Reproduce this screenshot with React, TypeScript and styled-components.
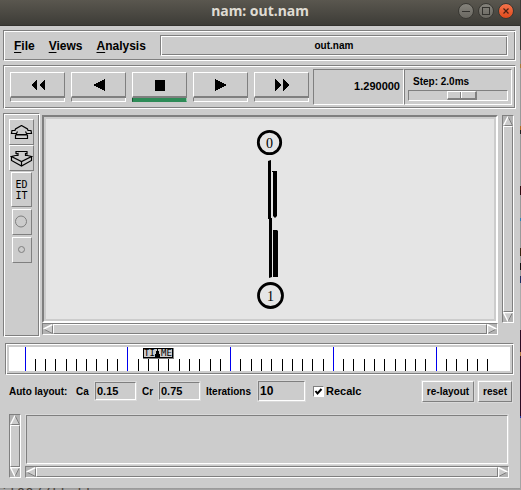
import React from "react";
import styled, { createGlobalStyle, css } from "styled-components";

const FACE = "#cccccc";
const DARK = "#7f7f7f";
const TROUGH = "#b3b3b3";

const Global = createGlobalStyle`
  * { box-sizing: border-box; }
  body { margin: 0; background: #9d9d9d; font-family: "Liberation Sans", Arial, sans-serif; color: #000; }
  button, input { font: inherit; color: inherit; margin: 0; padding: 0; border-radius: 0; }
`;

const raised = css`
  border: 1px solid;
  border-color: #fff ${DARK} ${DARK} #fff;
`;
const sunken = css`
  border: 1px solid;
  border-color: ${DARK} #fff #fff ${DARK};
`;
const groove = css`
  ${sunken}
  box-shadow: inset 1px 1px #fff, inset -1px -1px ${DARK};
`;

const Desktop = styled.div`
  display: flex;
  flex-direction: column;
  min-height: 100vh;
  padding-right: 1px;
  background: linear-gradient(#3b3a36 0 50px, #8c8c8c 50px 64px, #a87a3a 64px 68px, #999 68px 126px, #b06a20 126px 130px,
    #222 130px 134px, #999 134px 186px, #300a10 186px 195px, #999 195px 218px, #2b83b8 218px 221px, #999 221px 248px,
    #3a2410 248px 256px, #999 256px 263px, #111 263px 270px, #999 270px 276px, #1c2c60 276px 283px, #aaa 283px 330px,
    #2c0a22 330px 352px, #b07a40 352px 356px, #2c0a22 356px 416px, #2233aa 416px 418px, #a4a4a4 418px);
`;

const Window = styled.main`
  flex: 1;
  display: flex;
  flex-direction: column;
  background: ${FACE};
`;

const TitleBar = styled.header`
  position: relative;
  display: flex;
  align-items: center;
  justify-content: center;
  height: 26px;
  padding-bottom: 4px;
  background: linear-gradient(#5a574f, #3d3c37);
  border-bottom: 1px solid #33322e;
`;
const Title = styled.h1`
  margin: 0;
  font: bold 14px/20px "Noto Sans", sans-serif;
  color: #dfdbd2;
`;
const WindowControls = styled.div`
  position: absolute;
  right: 6px;
  top: 3px;
  display: flex;
  gap: 4px;
`;
const WindowButton = styled.button<{ $close?: boolean }>`
  display: grid;
  width: 16px;
  height: 16px;
  border: 1px solid #393833;
  border-radius: 50%;
  background: ${(p) => (p.$close ? "linear-gradient(#f4744c, #df4a1b)" : "linear-gradient(#85837c, #6a6861)")};
`;

const Body = styled.div`
  flex: 1;
  display: flex;
  flex-direction: column;
  padding: 4px 4px 10px 3px;
`;

const MenuBar = styled.nav`
  ${groove}
  display: flex;
  align-items: center;
  height: 31px;
  padding: 0 7px 0 10px;
`;
const MenuButton = styled.button`
  margin-right: 14px;
  border: 0;
  background: none;
  font-size: 12px;
  line-height: 20px;
  font-weight: bold;
  text-underline-offset: 2px;
`;
const FileName = styled.div`
  ${groove}
  flex: 1;
  height: 21px;
  text-align: center;
  font-size: 10px;
  font-weight: bold;
  line-height: 19px;
`;

const ToolBar = styled.section`
  ${groove}
  display: flex;
  height: 44px;
  margin-top: 4px;
  padding: 3px 3px 3px 6px;
`;
const Transport = styled.div`
  flex: 1;
  display: flex;
  gap: 6px;
  padding: 3px 0;
  margin-right: 4px;
`;
const TransportKey = styled.div`
  flex: 1;
`;
const KeyButton = styled.button`
  ${raised}
  border-bottom-width: 2px;
  display: flex;
  align-items: center;
  justify-content: center;
  width: 100%;
  height: 26px;
  background: ${FACE};
`;
const KeyLamp = styled.div<{ $on?: boolean }>`
  ${sunken}
  height: 4px;
  border-top: 0;
  background: ${(p) => (p.$on ? "#2e8b57" : FACE)};
  ${(p) => p.$on && "border-color: #1c5334 #8fc9a8 #2e8b57 #1c5334;"}
`;
const Readout = styled.output`
  ${sunken}
  width: 91px;
  padding-right: 3px;
  text-align: right;
  font-size: 11px;
  font-weight: bold;
  line-height: 33px;
`;
const StepPanel = styled.div`
  ${sunken}
  width: 108px;
  padding: 6px 3px 0;
`;
const StepLabel = styled.label`
  display: block;
  padding-left: 5px;
  font-size: 10px;
  font-weight: bold;
  line-height: 12px;
`;
const Slider = styled.input`
  ${sunken}
  appearance: none;
  display: block;
  width: 100%;
  height: 11px;
  margin-top: 2px;
  background: ${FACE};
  &::-webkit-slider-thumb {
    appearance: none;
    width: 30px;
    height: 9px;
    ${raised}
    border-bottom-width: 2px;
    border-right-width: 2px;
    background: linear-gradient(90deg, ${FACE} 0 12px, ${DARK} 12px 13px, #fff 13px 14px, ${FACE} 14px);
  }
`;

const Workspace = styled.div`
  flex: 1;
  display: flex;
  margin-top: 4px;
`;
const SideBar = styled.aside`
  ${groove}
  display: flex;
  flex-direction: column;
  align-items: center;
  width: 37px;
  margin-right: 2px;
  padding-top: 5px;
`;
const ToolButton = styled.button<{ $w: number; $h: number; $gap?: number }>`
  ${raised}
  display: grid;
  place-items: center;
  flex: none;
  width: ${(p) => p.$w}px;
  height: ${(p) => p.$h}px;
  margin-top: ${(p) => p.$gap ?? 0}px;
  background: ${FACE};
  font: 10px/11px "DejaVu Sans Mono", monospace;
`;
const ViewColumn = styled.div`
  flex: 1;
  display: flex;
  flex-direction: column;
  min-width: 0;
  padding: 2px 0;
`;
const View = styled.div`
  flex: 1;
  display: flex;
  min-height: 208px;
  padding: 2px;
  border: 2px solid;
  border-color: ${DARK} #fff #fff ${DARK};
`;
const Network = styled.svg`
  flex: 1;
  width: 100%;
  height: 100%;
  background: #e5e5e5;
`;
const ScrollSide = styled.div`
  display: flex;
  margin: 2px 2px 14px 4px;
`;

const Bar = styled.div<{ $vertical?: boolean }>`
  ${sunken}
  display: flex;
  flex-direction: ${(p) => (p.$vertical ? "column" : "row")};
  ${(p) => (p.$vertical ? "width: 12px;" : "height: 12px;")}
  background: ${TROUGH};
`;
const ArrowButton = styled.button`
  display: block;
  width: 10px;
  height: 10px;
  border: 0;
  background: none;
  svg { display: block; }
`;
const Thumb = styled.div`
  ${raised}
  flex: 1;
  background: ${FACE};
`;

const TimePanel = styled.section`
  ${groove}
  height: 32px;
  margin: 6px 2px 0;
  padding: 3px;
`;
const TimeScale = styled.svg`
  display: block;
  width: 100%;
  height: 24px;
  background: #fff;
`;

const LayoutForm = styled.form`
  display: flex;
  align-items: center;
  height: 24px;
  margin: 4px 0 1px;
  padding: 0 0 0 6px;
  font-weight: bold;
  font-size: 10px;
  label { white-space: nowrap; }
`;
const Caption = styled.span`
  width: 67px;
  white-space: nowrap;
`;
const Field = styled.label<{ $w: number }>`
  display: flex;
  align-items: center;
  justify-content: space-between;
  width: ${(p) => p.$w}px;
  margin-right: 6px;
`;
const Entry = styled.input<{ $large?: boolean }>`
  ${sunken}
  width: ${(p) => (p.$large ? 47 : 41)}px;
  height: ${(p) => (p.$large ? 20 : 18)}px;
  padding-left: 1px;
  outline: 1px solid #d9d9d9;
  background: ${FACE};
  font-size: ${(p) => (p.$large ? 12 : 11)}px;
`;
const CheckLabel = styled.label`
  display: flex;
  align-items: center;
  gap: 2px;
  margin-left: 2px;
  font-size: 11px;
`;
const CheckCell = styled.span`
  display: grid;
  > * { grid-area: 1 / 1; }
  svg { pointer-events: none; }
  input:not(:checked) + svg { visibility: hidden; }
`;
const CheckBox = styled.input`
  ${sunken}
  appearance: none;
  width: 11px;
  height: 11px;
  background: #fff;
`;
const FormButtons = styled.div`
  display: flex;
  gap: 4px;
  margin-left: auto;
  padding-right: 4px;
`;
const PushButton = styled.button`
  ${raised}
  height: 21px;
  padding: 0 3px;
  outline: 1px solid #d9d9d9;
  background: ${FACE};
  font-weight: bold;
  white-space: nowrap;
  font-size: 10px;
  padding: 0 4px;
`;

const Notes = styled.section`
  display: flex;
  gap: 4px;
  height: 64px;
  margin: 10px 7px 0 6px;
`;
const NotesColumn = styled.div`
  flex: 1;
  display: flex;
  flex-direction: column;
`;
const NotesArea = styled.div`
  ${sunken}
  flex: 1;
  margin: 1px 1px 2px;
  outline: 1px solid #d9d9d9;
`;

const Behind = styled.footer`
  height: 3px;
  overflow: hidden;
  background: linear-gradient(#969696, #b0b0b0);
  color: #484038;
  font: 14px/10px "DejaVu Sans Mono", monospace;
  white-space: pre;
`;

type Dir = "up" | "down" | "left" | "right";

const arrows: Record<Dir, { fill: string; light: string; dark: string }> = {
  up: { fill: "M5 0L10 10H0Z", light: "M.5 9.5L5 .5", dark: "M5 .5L9.5 9.5H0" },
  down: { fill: "M0 0H10L5 10Z", light: "M10 .5H.5L5 9.5", dark: "M5 9.5L9.5 .5" },
  left: { fill: "M0 5L10 0V10Z", light: "M.5 5L9.5 .5", dark: "M.5 5L9.5 9.5V0" },
  right: { fill: "M0 0L10 5L0 10Z", light: "M.5 10V.5L9.5 5", dark: "M9.5 5L.5 9.5" },
};

function Arrow({ dir }: { dir: Dir }) {
  const a = arrows[dir];
  return (
    <ArrowButton type="button" aria-label={`Scroll ${dir}`}>
      <svg width="10" height="10" fill="none">
        <path d={a.fill} fill={FACE} />
        <path d={a.dark} stroke={DARK} />
        <path d={a.light} stroke="#fff" strokeWidth="1.4" />
      </svg>
    </ArrowButton>
  );
}

function ScrollBar({ vertical }: { vertical?: boolean }) {
  return (
    <Bar $vertical={vertical}>
      <Arrow dir={vertical ? "up" : "left"} />
      <Thumb />
      <Arrow dir={vertical ? "down" : "right"} />
    </Bar>
  );
}

const keys = [
  { name: "Rewind", d: "M7 0V12L1 6ZM15 0V12L9 6Z" },
  { name: "Play backward", d: "M14 0V12L2 6Z" },
  { name: "Stop", d: "M3 1H13V12H3Z", on: true },
  { name: "Play forward", d: "M2 0V12L14 6Z" },
  { name: "Fast forward", d: "M1 0V12L7 6ZM9 0V12L15 6Z" },
];

const ticks = Array.from({ length: 46 }, (_, i) => ({ x: 16 + Math.floor(i * 10.28), major: i % 10 === 0 }));

export default function App() {
  return (
    <Desktop>
      <Global />
      <Window>
        <TitleBar>
          <Title>nam: out.nam</Title>
          <WindowControls>
            <WindowButton aria-label="Minimize">
              <svg width="14" height="14"><path d="M3 7.5H11" stroke="#33322e" /></svg>
            </WindowButton>
            <WindowButton aria-label="Maximize">
              <svg width="14" height="14"><rect x="3.5" y="3.5" width="7" height="7" fill="none" stroke="#33322e" /></svg>
            </WindowButton>
            <WindowButton aria-label="Close" $close>
              <svg width="14" height="14"><path d="M4.5 4.5L9.5 9.5M9.5 4.5L4.5 9.5" stroke="#4a2013" strokeWidth="1.2" /></svg>
            </WindowButton>
          </WindowControls>
        </TitleBar>
        <Body>
          <MenuBar>
            <MenuButton><u>F</u>ile</MenuButton>
            <MenuButton><u>V</u>iews</MenuButton>
            <MenuButton><u>A</u>nalysis</MenuButton>
            <FileName>out.nam</FileName>
          </MenuBar>

          <ToolBar>
            <Transport>
              {keys.map((k) => (
                <TransportKey key={k.name}>
                  <KeyButton aria-label={k.name}>
                    <svg width="16" height="12" shapeRendering="crispEdges"><path d={k.d} /></svg>
                  </KeyButton>
                  <KeyLamp $on={k.on} />
                </TransportKey>
              ))}
            </Transport>
            <Readout>1.290000</Readout>
            <StepPanel>
              <StepLabel htmlFor="step">Step: 2.0ms</StepLabel>
              <Slider id="step" type="range" defaultValue={56} />
            </StepPanel>
          </ToolBar>

          <Workspace>
            <SideBar>
              <ToolButton $w={25} $h={26} aria-label="Zoom in">
                <svg width="23" height="24" fill="none" stroke="#000" strokeWidth="1.2">
                  <path d="M11.5 5.5L5.5 9L5 10.5H2L1.5 13.5H6.5L7.5 11.5M11.5 5.5L17.5 9L18 10.5H21L21.5 13.5H16.5L15.5 11.5M6.5 13.5V14.5H16.5V13.5" />
                  <path d="M5.5 15V18.5H17.5V15Z" />
                </svg>
              </ToolButton>
              <ToolButton $w={25} $h={26} aria-label="Zoom out">
                <svg width="23" height="24" fill="none" stroke="#000" strokeWidth="1.2">
                  <path d="M6 8V5.5H17V8L15.5 7.5V9.5H17.5L21.5 10.5L11.5 15.5L1.5 10.5L5.5 9.5H8V7.5L6 8" />
                  <path d="M1.5 10.5V14.5L11.5 20L21.5 14.5V10.5M11.5 15.5V20" />
                </svg>
              </ToolButton>
              <ToolButton $w={21} $h={35} $gap={1}>ED<br />IT</ToolButton>
              <ToolButton $w={20} $h={26} $gap={2} aria-label="Larger nodes">
                <svg width="18" height="24"><circle cx="8" cy="11.5" r="5.5" fill="none" stroke={DARK} /></svg>
              </ToolButton>
              <ToolButton $w={20} $h={26} $gap={2} aria-label="Smaller nodes">
                <svg width="18" height="24"><circle cx="8.5" cy="11.5" r="3" fill="none" stroke={DARK} /></svg>
              </ToolButton>
            </SideBar>
            <ViewColumn>
              <View>
                <Network viewBox="46 119 448 200" fontFamily="Liberation Serif, serif" fontSize="14" textAnchor="middle">
                  <g fill="none" stroke="#000" strokeWidth="2.8">
                    <circle cx="269.5" cy="142.5" r="11.2" />
                    <circle cx="270.5" cy="295.5" r="12" />
                  </g>
                  <text x="269.5" y="147.5">0</text>
                  <text x="270.5" y="300.5">1</text>
                  <path d="M268 161L271 160V218H272V277L269 278V219H268Z" />
                  <path d="M272 171H277V216L275 218L273 216V172H272Z" />
                  <path d="M273 230H277L278 231V277H273Z" />
                </Network>
              </View>
              <ScrollBar />
            </ViewColumn>
            <ScrollSide>
              <ScrollBar vertical />
            </ScrollSide>
          </Workspace>

          <TimePanel>
            <TimeScale shapeRendering="crispEdges">
              {ticks.map((t) => (
                <rect key={t.x} x={t.x} y={t.major ? 0 : 12} width="1" height={t.major ? 24 : 12} fill={t.major ? "#0000ee" : "#000"} />
              ))}
              <rect x="134" y="1" width="31" height="11" fill={DARK} />
              <rect x="134.5" y="1.5" width="29" height="9" fill={FACE} stroke="#000" />
              <g fontFamily="DejaVu Sans Mono, monospace" fontSize="9">
                <text x="135" y="9">TI</text>
                <text x="152" y="9">ME</text>
              </g>
              <path d="M148 2H149V4H150V7H151V11H146V7H147V4H148Z" />
            </TimeScale>
          </TimePanel>

          <LayoutForm onSubmit={(e) => e.preventDefault()}>
            <Caption>Auto layout:</Caption>
            <Field $w={60}>Ca <Entry defaultValue="0.15" /></Field>
            <Field $w={58}>Cr <Entry defaultValue="0.75" /></Field>
            <Field $w={99}>Iterations <Entry $large defaultValue="10" /></Field>
            <CheckLabel>
              <CheckCell>
                <CheckBox type="checkbox" defaultChecked />
                <svg width="11" height="11"><path d="M2.5 5L4.5 7.5L8.5 3" fill="none" stroke="#000" strokeWidth="2" /></svg>
              </CheckCell>
              Recalc
            </CheckLabel>
            <FormButtons>
              <PushButton type="button">re-layout</PushButton>
              <PushButton type="button">reset</PushButton>
            </FormButtons>
          </LayoutForm>

          <Notes>
            <ScrollBar vertical />
            <NotesColumn>
              <NotesArea />
              <ScrollBar />
            </NotesColumn>
          </Notes>
        </Body>
      </Window>
      <Behind aria-hidden>i[00//ltall</Behind>
    </Desktop>
  );
}
